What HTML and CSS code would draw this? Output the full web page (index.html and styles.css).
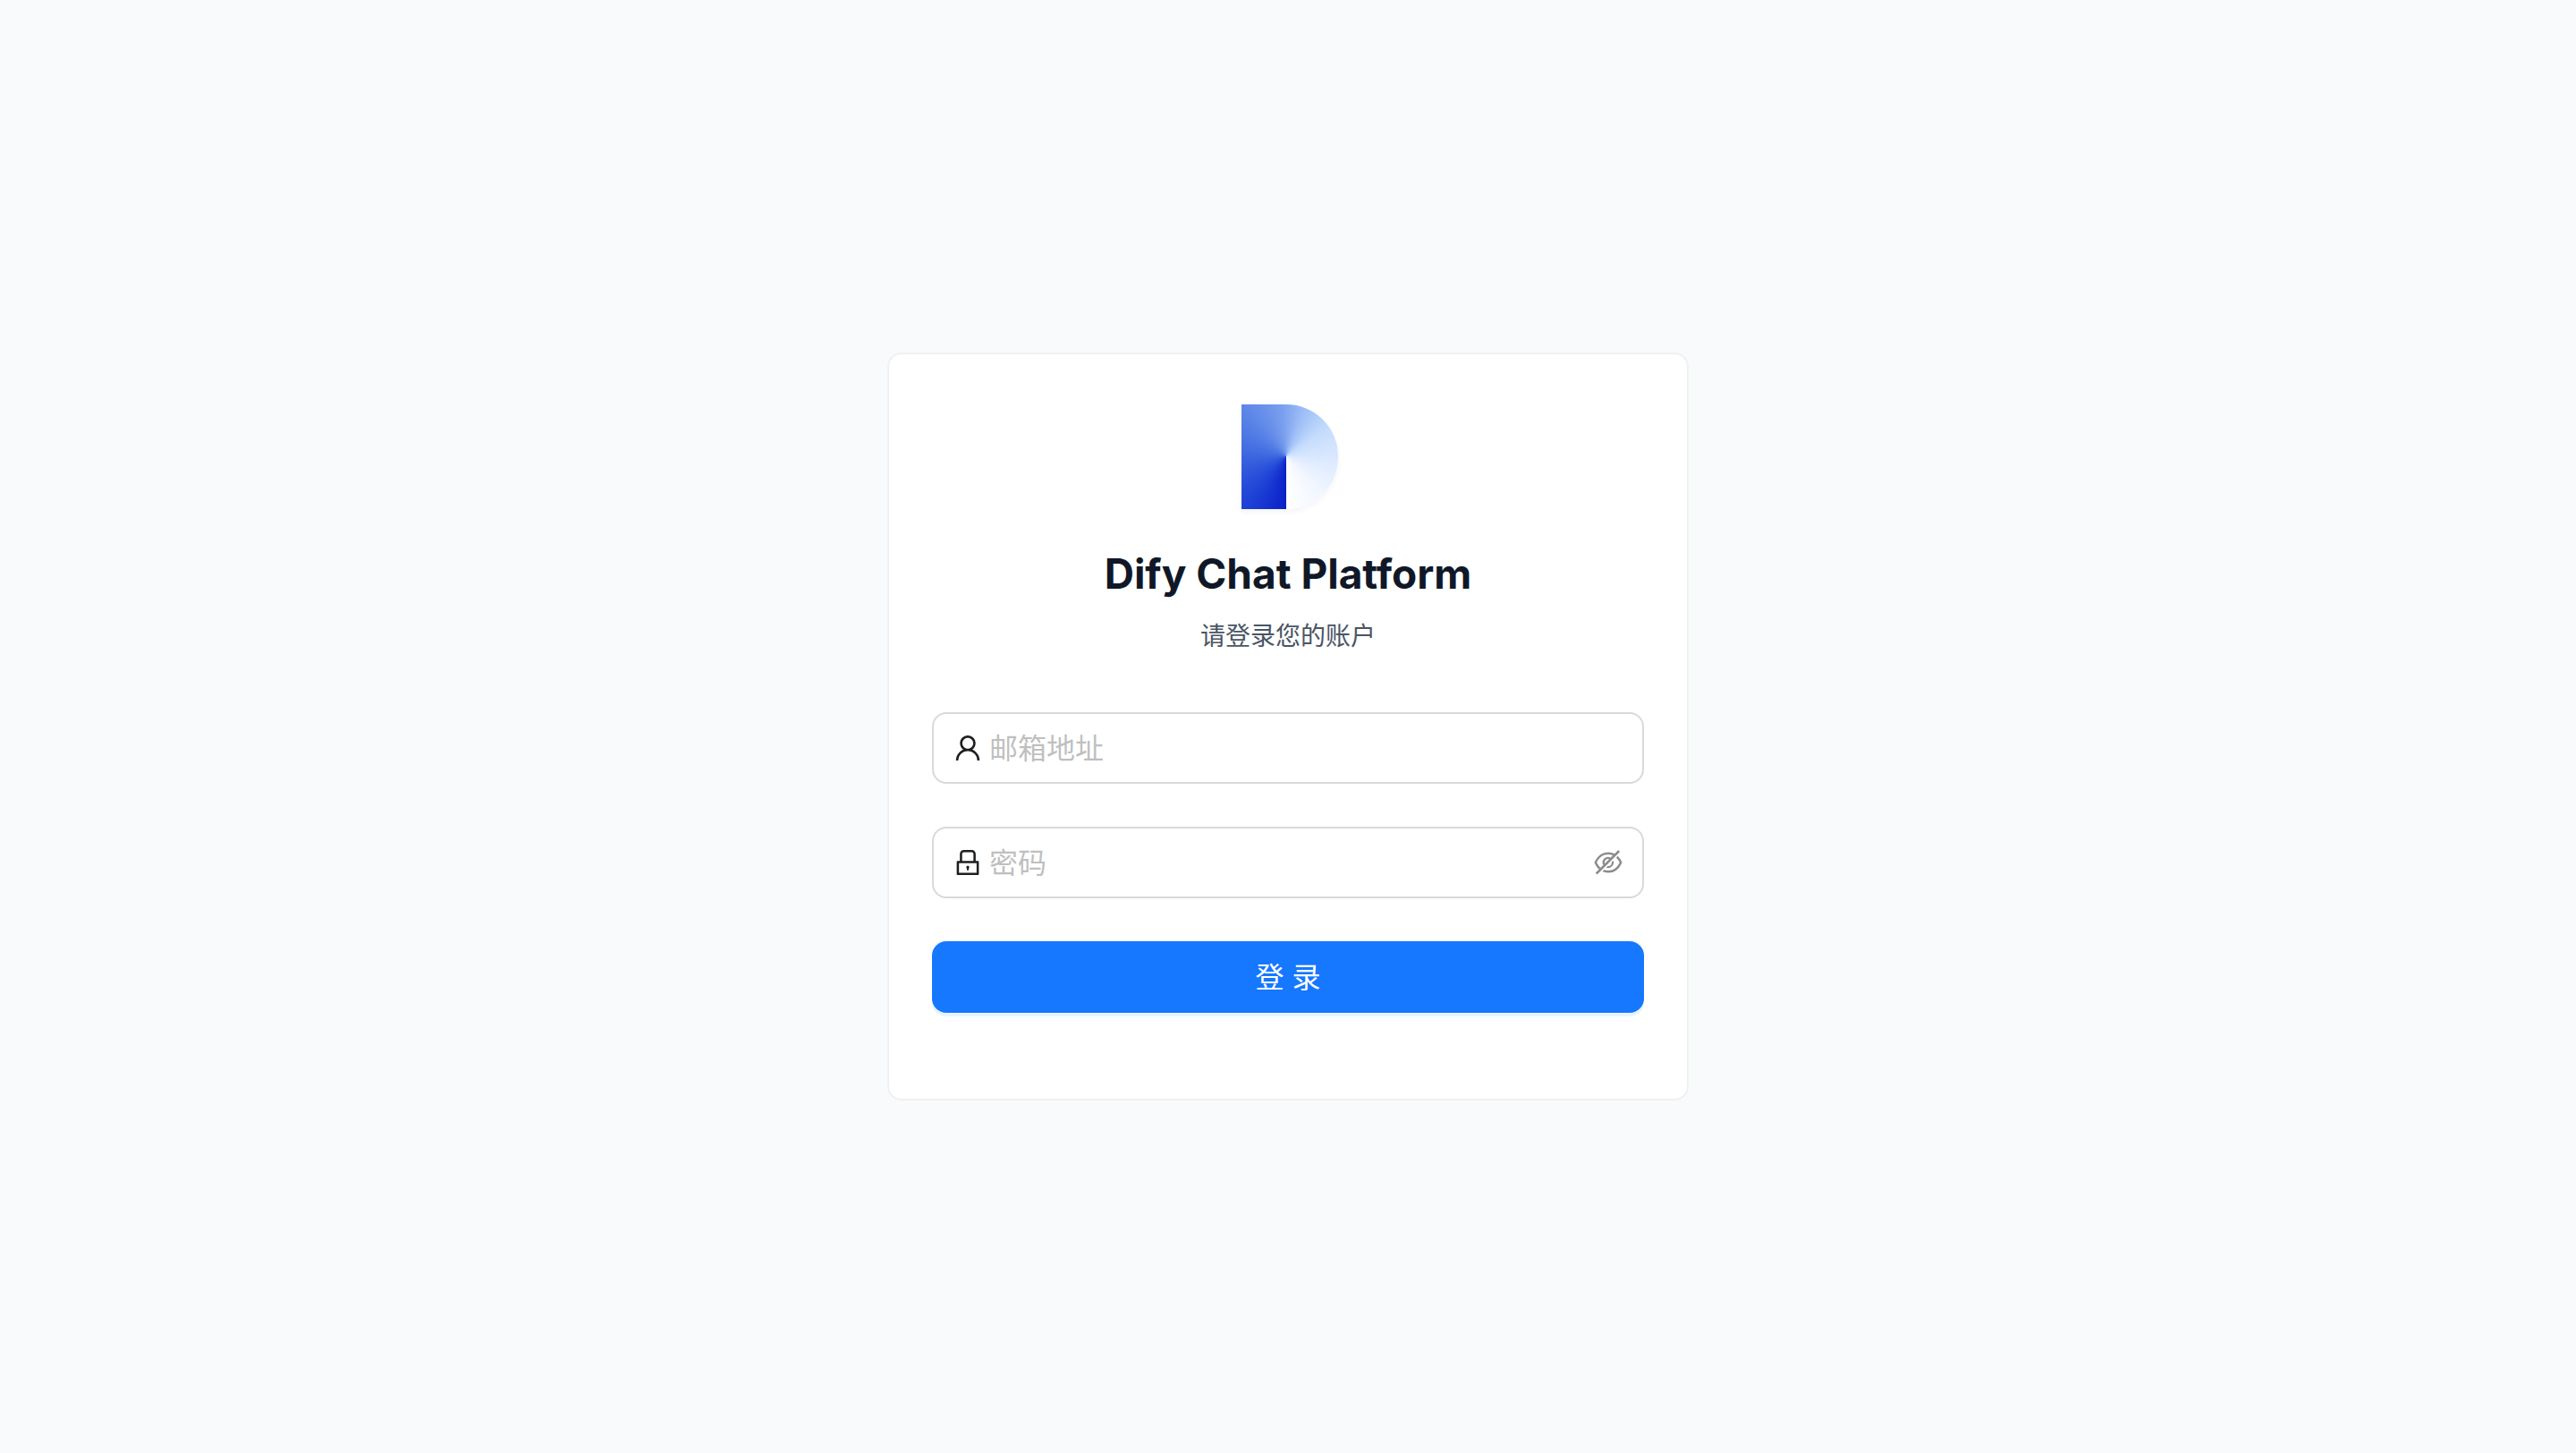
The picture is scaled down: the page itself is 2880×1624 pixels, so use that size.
FILE: index.html
```html
<!DOCTYPE html>
<html lang="zh-CN">
<head>
<meta charset="utf-8">
<meta name="viewport" content="width=device-width, initial-scale=1">
<title>Dify Chat Platform</title>
<link rel="stylesheet" href="styles.css">
</head>
<body>
<main class="page">
  <section class="card">
    <header class="header">
      <div class="logo" role="img" aria-label="Dify"><div class="logo-shape"></div></div>
      <h1 class="title">Dify Chat Platform</h1>
      <p class="subtitle">请登录您的账户</p>
    </header>
    <form class="form">
      <div class="field">
        <label class="icon" for="email" aria-label="邮箱地址">
          <svg viewBox="0 0 1024 1024" fill="currentColor" aria-hidden="true"><path d="M858.5 763.6a374 374 0 00-80.6-119.5 375.63 375.63 0 00-119.5-80.6c-.4-.2-.8-.3-1.2-.5C719.5 518 760 444.7 760 362c0-137-111-248-248-248S264 225 264 362c0 82.7 40.5 156 102.8 201.1-.4.2-.8.3-1.2.5-44.8 18.9-85 46-119.5 80.6a375.63 375.63 0 00-80.6 119.5A371.7 371.7 0 00136 901.8a8 8 0 008 8.2h60c4.4 0 7.9-3.5 8-7.8 2-77.2 33-149.5 87.8-204.3 56.7-56.7 132-87.9 212.2-87.9s155.5 31.2 212.2 87.9C779 752.7 810 825 812 902.2c.1 4.4 3.6 7.8 8 7.8h60a8 8 0 008-8.2c-1-47.8-10.9-94.3-29.5-138.2zM512 534c-45.9 0-89.1-17.9-121.6-50.4S340 407.9 340 362c0-45.9 17.9-89.1 50.4-121.6S466.1 190 512 190s89.1 17.9 121.6 50.4S684 316.1 684 362c0 45.9-17.9 89.1-50.4 121.6S557.9 534 512 534z"/></svg>
        </label>
        <input class="input" id="email" type="text" placeholder="邮箱地址">
      </div>
      <div class="field">
        <label class="icon" for="password" aria-label="密码">
          <svg viewBox="0 0 1024 1024" fill="currentColor" aria-hidden="true"><path d="M832 464h-68V240c0-70.7-57.3-128-128-128H388c-70.7 0-128 57.3-128 128v224h-68c-17.7 0-32 14.3-32 32v384c0 17.7 14.3 32 32 32h640c17.7 0 32-14.3 32-32V496c0-17.7-14.3-32-32-32zM332 240c0-30.9 25.1-56 56-56h248c30.9 0 56 25.1 56 56v224H332V240zm460 600H232V536h560v304zM484 701v53c0 4.4 3.6 8 8 8h40c4.4 0 8-3.6 8-8v-53a48.01 48.01 0 10-56 0z"/></svg>
        </label>
        <input class="input" id="password" type="password" placeholder="密码">
        <button class="icon toggle" type="button" aria-label="显示密码">
          <svg viewBox="0 0 1024 1024" fill="currentColor" aria-hidden="true"><path d="M942.2 486.2Q889.47 375.11 816.7 305l-50.88 50.88C807.31 395.53 843.45 447.4 874.7 512 791.5 684.2 673.4 766 512 766q-72.67 0-133.87-22.38L323 798.75Q408 838 512 838q288.3 0 430.2-300.3a60.29 60.29 0 000-51.5zm-63.57-320.64L836 122.88a8 8 0 00-11.32 0L715.31 232.2Q624.86 186 512 186q-288.3 0-430.2 300.3a60.3 60.3 0 000 51.5q56.69 119.4 136.5 191.41L112.48 835a8 8 0 000 11.31L155.17 889a8 8 0 0011.31 0l712.15-712.12a8 8 0 000-11.32zM149.3 512C232.6 339.8 350.7 258 512 258c54.54 0 104.13 9.36 149.12 28.39l-70.3 70.3a176 176 0 00-238.13 238.13l-83.42 83.42C223.1 637.49 183.3 582.28 149.3 512zm246.7 0a112.11 112.11 0 01146.2-106.69L401.31 546.2A112 112 0 01396 512z"/><path d="M508 624c-3.46 0-6.87-.16-10.25-.47l-52.82 52.82a176.09 176.09 0 00227.42-227.42l-52.82 52.82c.31 3.38.47 6.79.47 10.25a111.94 111.94 0 01-112 112z"/></svg>
        </button>
      </div>
      <button class="submit" type="submit">登 录</button>
    </form>
  </section>
</main>
</body>
</html>
```
FILE: styles.css
```css
*,
*::before,
*::after {
  box-sizing: border-box;
}

body {
  margin: 0;
  font-family: Inter, "Noto Sans CJK SC", sans-serif;
  background: #f9fafb;
}

.page {
  display: flex;
  align-items: center;
  justify-content: center;
  min-height: 100vh;
}

.card {
  width: 100%;
  max-width: 896px;
  padding: 48px 48px 96px;
  background: #fff;
  border: 2px solid #f0f0f0;
  border-radius: 16px;
}

.header {
  display: flex;
  flex-direction: column;
  align-items: center;
  margin-bottom: 64px;
  text-align: center;
}

.logo {
  display: flex;
  align-items: center;
  justify-content: center;
  width: 128px;
  height: 128px;
  margin-bottom: 32px;
  padding: 4px 0 0 3px;
}

.logo-shape {
  width: 108px;
  height: 117px;
  border-radius: 0 58px 58px 0;
  background: conic-gradient(from 180deg at 50px 58px, #0a20c8 0deg, #1f42d6 40deg, #3c66df 90deg, #5680e6 130deg, #7a9fee 175deg, #a2c2f8 205deg, #c4dcfc 235deg, #dce9ff 275deg, #f1f6ff 315deg, #fff 360deg);
  box-shadow: 0 3px 6px rgba(20, 40, 80, 0.05);
}

.title {
  margin: 0 0 12px;
  font-size: 46px;
  font-weight: 700;
  font-variant-ligatures: none;
  font-feature-settings: "calt" 0;
  line-height: 74px;
  color: #101828;
}

.subtitle {
  margin: 0;
  font-size: 28px;
  line-height: 42px;
  color: #4a5565;
}

.form {
  display: flex;
  flex-direction: column;
  gap: 48px;
}

.field {
  display: flex;
  align-items: center;
  gap: 6px;
  height: 80px;
  padding: 0 20px;
  background: #fff;
  border: 2px solid #d9d9d9;
  border-radius: 16px;
}

.icon {
  flex: none;
  width: 36px;
  height: 36px;
  color: #1f1f1f;
}

.icon svg {
  display: block;
  width: 100%;
  height: 100%;
}

.toggle {
  padding: 0;
  border: 0;
  background: none;
  color: #8c8c8c;
  cursor: pointer;
}

.input {
  flex: 1;
  min-width: 0;
  padding: 2px 0 0;
  border: 0;
  outline: 0;
  background: none;
  font: inherit;
  font-size: 32px;
  line-height: 48px;
  color: #1f1f1f;
}

.input::placeholder {
  color: #bfbfbf;
  opacity: 1;
}

.submit {
  height: 80px;
  padding: 2px 0 0;
  border: 0;
  border-radius: 16px;
  background: #1677ff;
  box-shadow: 0 4px 0 rgba(5, 145, 255, 0.1);
  color: #fff;
  font: inherit;
  font-size: 32px;
  line-height: 48px;
  cursor: pointer;
}
```
